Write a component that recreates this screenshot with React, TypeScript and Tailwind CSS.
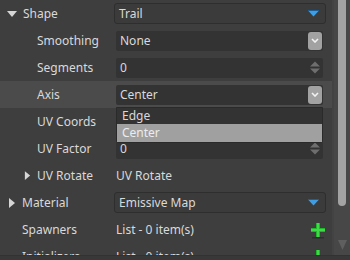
import React from 'react';

const BlueArrow = () => (
  <svg width="11" height="7" viewBox="0 0 11 7">
    <path d="M0 0.5 H11 L5.5 6.5 Z" fill="#3d9ee6" />
    <path d="M0 0.5 H11" stroke="#1d5f94" strokeWidth="1" />
  </svg>
);

const ChevronButton = () => (
  <div className="w-[14px] h-[18px] rounded-[3px] bg-[#a2a2a2] flex items-center justify-center">
    <svg width="8" height="5" viewBox="0 0 8 5">
      <path d="M1 1 L4 4 L7 1" stroke="#f2f2f2" strokeWidth="1.6" fill="none" />
    </svg>
  </div>
);

const Spinner = () => (
  <svg width="10" height="13" viewBox="0 0 10 13">
    <path d="M0 5.5 L5 0.5 L10 5.5 Z" fill="#6e6e6e" />
    <path d="M0 7.5 L5 12.5 L10 7.5 Z" fill="#6e6e6e" />
  </svg>
);

const Plus = () => (
  <svg width="14" height="16" viewBox="0 0 14 16">
    <rect x="1" y="14" width="12" height="1.5" fill="#262626" opacity="0.7" />
    <rect x="5" y="0" width="4" height="14" fill="#1fb82a" />
    <rect x="0" y="5" width="14" height="4" fill="#1fb82a" />
    <rect x="6" y="0" width="2" height="14" fill="#3fd94a" />
    <rect x="0" y="6" width="14" height="2" fill="#3fd94a" />
  </svg>
);

const Tri = ({ down, size = 8 }: { down?: boolean; size?: number }) =>
  down ? (
    <svg width={size + 2} height={size} viewBox="0 0 10 8">
      <path d="M0 1 H10 L5 7 Z" fill="#d6d6d6" />
    </svg>
  ) : (
    <svg width={size} height={size + 2} viewBox="0 0 8 10">
      <path d="M1 0 V10 L7 5 Z" fill="#d6d6d6" />
    </svg>
  );

const Row = ({
  children,
  label,
  indent,
  highlight,
}: {
  children?: React.ReactNode;
  label: React.ReactNode;
  indent?: boolean;
  highlight?: boolean;
}) => (
  <div className={`flex items-center h-[27px] shrink-0 ${highlight ? 'bg-[#4b4b4b]' : ''}`}>
    <div className={`w-[116px] shrink-0 flex items-center ${indent ? 'pl-[37px]' : 'pl-[22px]'}`}>{label}</div>
    <div className="flex-1 pr-[9px] flex items-center">{children}</div>
  </div>
);

const DropBox = ({ text }: { text: string }) => (
  <div className="-ml-[2px] -mr-[3px] flex-1 h-[21px] rounded-[3px] border border-[#2e2e2e] bg-[#3b3b3b] flex items-center justify-between pl-[4px] pr-[6px]">
    <span>{text}</span>
    <BlueArrow />
  </div>
);

const InputBox = ({ text, right }: { text: string; right: React.ReactNode }) => (
  <div className="flex-1 h-[20px] rounded-[2px] bg-[#333333] flex items-center justify-between pl-[4px] pr-[1px]">
    <span>{text}</span>
    <div className="flex items-center justify-center w-[14px]">{right}</div>
  </div>
);

export default function App() {
  return (
    <div
      className="w-[350px] h-[260px] bg-[#3e3e3e] text-[#d9d9d9] text-[12px] overflow-hidden flex flex-col"
      style={{ fontFamily: '"Noto Sans", "Liberation Sans", sans-serif' }}
    >
      <div className="h-[255px] shrink-0 flex overflow-hidden">
        <div className="flex-1 flex flex-col relative">
          <Row
            label={
              <span className="flex items-center -ml-[15px] gap-[6px]">
                <Tri down />
                Shape
              </span>
            }
          >
            <DropBox text="Trail" />
          </Row>
          <Row label="Smoothing" indent>
            <InputBox text="None" right={<ChevronButton />} />
          </Row>
          <Row label="Segments" indent>
            <InputBox text="0" right={<Spinner />} />
          </Row>
          <Row label="Axis" indent highlight>
            <InputBox text="Center" right={<ChevronButton />} />
          </Row>
          <Row label="UV Coords" indent>
            <InputBox text="" right={null} />
          </Row>
          <Row label="UV Factor" indent>
            <InputBox text="0" right={<Spinner />} />
          </Row>
          <Row
            label={
              <span className="flex items-center -ml-[13px] gap-[6px]">
                <Tri size={7} />
                UV Rotate
              </span>
            }
            indent
          >
            <span>UV Rotate</span>
          </Row>
          <Row
            label={
              <span className="flex items-center -ml-[14px] gap-[6px]">
                <Tri />
                Material
              </span>
            }
          >
            <DropBox text="Emissive Map" />
          </Row>
          <Row label="Spawners">
            <div className="flex-1 flex items-center justify-between">
              <span>List - 0 item(s)</span>
              <span className="mr-[-2px] mt-[2px]">
                <Plus />
              </span>
            </div>
          </Row>
          <Row label="Initializers">
            <div className="flex-1 flex items-center justify-between">
              <span>List - 0 item(s)</span>
              <span className="mr-[-2px] mt-[2px]">
                <Plus />
              </span>
            </div>
          </Row>

          {/* open dropdown list */}
          <div className="absolute left-[116px] top-[107px] w-[207px] bg-[#333333] border border-[#2a2a2a] rounded-b-[3px] flex flex-col">
            <div className="h-[16px] flex items-center pl-[5px]">Edge</div>
            <div className="h-[18px] flex items-center pl-[5px] bg-[#a0a0a0] text-[#ececec]">Center</div>
          </div>
        </div>

        {/* scrollbar */}
        <div className="w-[18px] shrink-0 bg-[#474747] border-l-2 border-[#434343] flex flex-col items-center">
          <div className="w-[8px] h-[206px] shrink-0 bg-[#a3a3a3] rounded-b-[4px]" />
          <div className="flex-1 flex items-end pb-[5px]">
            <svg width="9" height="10" viewBox="0 0 9 10">
              <path d="M0 0 H9 L4.5 10 Z" fill="#5f5f5f" />
            </svg>
          </div>
        </div>
      </div>
      <div className="flex-1 bg-[#383838] border-t border-[#323232]" />
    </div>
  );
}
